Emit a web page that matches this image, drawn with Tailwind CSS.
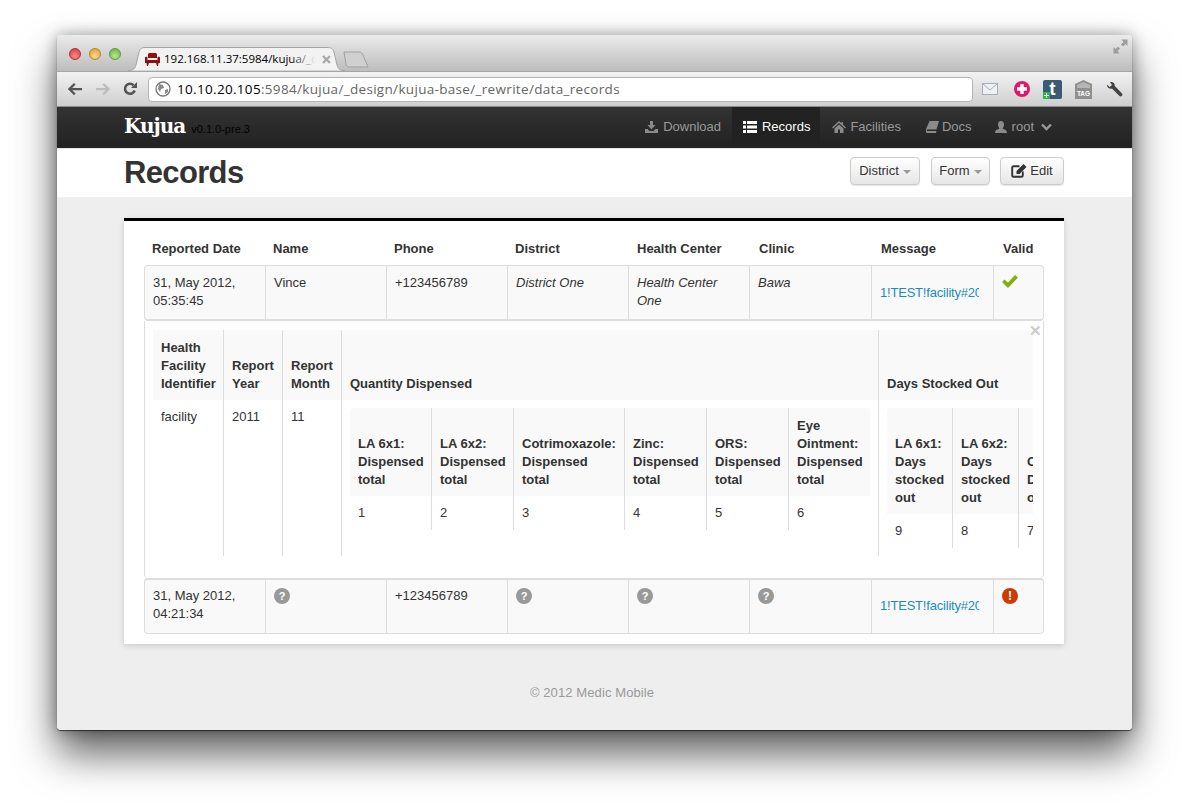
<!DOCTYPE html>
<html lang="en">
<head>
    <meta charset="UTF-8">
    <title>Records</title>
    <script src="https://cdn.jsdelivr.net/npm/@tailwindcss/browser@4"></script>
</head>
<body class="bg-white h-[809px] overflow-hidden font-['Liberation_Sans',sans-serif] text-[13px] leading-[18px] text-[#333]">
    <!-- Browser window -->
    <div class="ml-[57px] mt-[35px] w-[1075px] h-[695px] rounded-[4px] overflow-hidden flex flex-col bg-[#eeeeee] shadow-[0_1px_1px_rgba(0,0,0,0.6),0_24px_40px_rgba(0,0,0,0.62),0_0_16px_rgba(0,0,0,0.35)]">
        <!-- Tab strip -->
        <div class="h-[36px] shrink-0 relative bg-gradient-to-b from-[#ebebeb] to-[#bdbdbd] flex items-end pl-[12px]">
            <div class="flex gap-[8px] self-start mt-[13px]">
                <span class="w-[12px] h-[12px] rounded-full bg-[radial-gradient(circle_at_50%_70%,#ff8a8a,#d8323a)] border border-[#a33]"></span>
                <span class="w-[12px] h-[12px] rounded-full bg-[radial-gradient(circle_at_50%_70%,#ffd98a,#dd9a2a)] border border-[#b5842c]"></span>
                <span class="w-[12px] h-[12px] rounded-full bg-[radial-gradient(circle_at_50%_70%,#b6ea8e,#64ab3e)] border border-[#5c9a3c]"></span>
            </div>
            <!-- Active tab -->
            <div class="relative ml-[7px] w-[217px] h-[24px] flex items-center pl-[17px] text-[11.5px] text-black font-['Open_Sans',sans-serif] whitespace-nowrap">
                <svg width="217" height="24" viewBox="0 0 217 24" class="absolute left-0 top-0"><path d="M0 23.500C5 23.500 7 22 8 18L11 5C12 1.500 14 .5 17 .5H199C203 .5 205 1.500 206 5L209 18C210 22 212 23.500 217 23.500" fill="#f2f2f2" stroke="#a5a5a5"/></svg>
                <svg width="15" height="13" viewBox="0 0 15 13" class="relative shrink-0" fill="#8e1010"><path d="M3 1.500C3 .5 4 0 5 0h5c1 0 2 .5 2 1.500V5H3z M0 4.500C0 3.500 2.500 3.500 2.500 4.500V7h10V4.500C12.500 3.500 15 3.500 15 4.500V10H0z M1.500 10h2.500l-1 3H2z M11 10h2.500l-.5 3h-1z"/></svg>
                <span class="relative ml-[4px] w-[152px] overflow-hidden">192.168.11.37:5984/kujua/_design<span class="absolute right-0 top-0 h-full w-[26px] bg-gradient-to-r from-transparent to-[#f2f2f2]"></span></span>
                <svg width="9" height="9" viewBox="0 0 9 9" class="relative ml-[6px]" stroke="#a8a8a8" stroke-width="2.200"><path d="M1 1l7 7M8 1l-7 7"/></svg>
            </div>
            <!-- New tab -->
            <svg width="26" height="17" viewBox="0 0 26 17" class="-ml-[2px] mb-[3px]"><path d="M1 1H16C18 1 19 2 20 4L25 16H6C4 16 3.500 15 3 13z" fill="#d0d0d0" stroke="#a0a0a0"/></svg>
            <!-- Fullscreen arrows -->
            <svg width="15" height="15" viewBox="0 0 15 15" class="absolute right-[4px] top-[4px]" fill="#9d9d9d"><path d="M14.500 .5v6.500l-2-2-2.500 2.500-2-2L10.500 3l-2-2.500z M.5 14.500V8l2 2L5 7.500l2 2L4.500 12l2 2.500z"/></svg>
        </div>
        <!-- Toolbar -->
        <div class="h-[36px] shrink-0 bg-gradient-to-b from-[#f2f2f2] to-[#cfcfcf] border-y border-t-[#a5a5a5] border-b-[#8c8c8c] flex items-center pl-[10px]">
            <svg width="16" height="14" viewBox="0 0 16 14" fill="#555"><path d="M7 1l1.600 1.600L5.200 6H15v2.200H5.200l3.400 3.400L7 13.200.8 7.100z"/></svg>
            <svg width="16" height="14" viewBox="0 0 16 14" fill="#bdbdbd" class="ml-[12px]"><path d="M9 1L7.400 2.600 10.800 6H1v2.200h9.800l-3.400 3.400L9 13.200l6.200-6.100z"/></svg>
            <svg width="16" height="16" viewBox="0 0 16 16" class="ml-[11px]"><path d="M12.700 9.500A5 5 0 1 1 11.500 4.200" fill="none" stroke="#555" stroke-width="2.600"/><path d="M9 7h6V1z" fill="#555"/></svg>
            <div class="ml-[10px] w-[825px] h-[25px] bg-white border border-[#b5b5b5] rounded-[4px] flex items-center pl-[6px] text-[13.5px] tracking-[0.32px] font-['Open_Sans',sans-serif] text-[#666]">
                <svg width="16" height="16" viewBox="0 0 16 16"><circle cx="8" cy="8" r="7" fill="#fff" stroke="#777" stroke-width="1.300"/><path d="M4 3l4 1 1 3-3 1-1 3-2-3z M10 9l3-1 0 3-3 2z" fill="#888"/></svg>
                <span class="ml-[6px] whitespace-nowrap"><span class="text-black">10.10.20.105</span>:5984/kujua/_design/kujua-base/_rewrite/data_records</span>
            </div>
            <!-- Extension icons -->
            <svg width="16" height="12" viewBox="0 0 16 12" class="ml-[9px]"><rect x=".5" y=".5" width="15" height="11" fill="#eef0f4" stroke="#a8adb8"/><path d="M1 1l7 6 7-6" fill="none" stroke="#a8adb8"/></svg>
            <span class="ml-[16px] w-[16px] h-[16px] rounded-full bg-[#e0176f] flex items-center justify-center">
                <svg width="10" height="10" viewBox="0 0 10 10" fill="#fff"><path d="M3.300 0h3.400v3.300H10v3.400H6.700V10H3.300V6.700H0V3.300h3.300z"/></svg>
            </span>
            <span class="ml-[13px] w-[19px] h-[19px] rounded-[2px] bg-[#3c5a78] text-white font-bold text-[19px] leading-[18px] text-center relative">t<span class="absolute left-0 bottom-0 w-[7px] h-[7px] bg-[#29b34a] flex items-center justify-center"><svg width="5" height="5" viewBox="0 0 5 5" fill="#fff"><path d="M2 0h1v2h2v1H3v2H2V3H0V2h2z"/></svg></span></span>
            <svg width="17" height="19" viewBox="0 0 17 19" class="ml-[13px]"><path d="M8.500 0L17 4v15H0V4z" fill="#8f8f8f"/><path d="M8.500 2L15 5v3H2V5z" fill="#b5b5b5"/><text x="8.500" y="16" font-size="6.500" font-weight="bold" text-anchor="middle" fill="#fff" font-family="Liberation Sans">TAG</text></svg>
            <svg width="17" height="17" viewBox="0 0 17 17" class="ml-[14px]" fill="#444"><path d="M1 3.500L3.500 6 6 4 4 1.200C6.500.200 9 2 8.800 5l7 7.200a1.800 1.800 0 0 1-2.600 2.600L6.200 7.800C3 8.300.6 6 1 3.500z"/></svg>
        </div>
        <!-- Navbar -->
        <nav class="h-[41px] shrink-0 bg-gradient-to-b from-[#333] to-[#222] border-b border-[#252525] flex pl-[67px] pr-[78px] text-[13px] text-[#999]">
            <div class="flex items-baseline pt-[7px]">
                <span class="text-white font-bold text-[20px] leading-[24px] font-['DejaVu_Serif',serif] tracking-[-1px]">Kujua</span>
                <span class="ml-[6px] text-[11px] text-black">v0.1.0-pre.3</span>
            </div>
            <div class="ml-auto flex items-center">
                <a class="flex items-center pr-[11px] h-full"><svg width="13" height="12" viewBox="0 0 13 12" fill="#8a8a8a" class="mr-[5px]"><path d="M5 0h3v4h2.500L6.500 8.500 2.500 4H5z M0 8h2.500l2 2h4l2-2H13v4H0z"/></svg>Download</a>
                <a class="flex items-center pl-[11px] pr-[10px] h-full bg-[#222] text-white"><svg width="14" height="12" viewBox="0 0 14 12" fill="#fff" class="mr-[5px]"><path d="M0 0h3v3H0z M4 0h10v3H4z M0 4.500h3v3H0z M4 4.500h10v3H4z M0 9h3v3H0z M4 9h10v3H4z"/></svg>Records</a>
                <a class="flex items-center pl-[12px] pr-[11px] h-full"><svg width="14" height="12" viewBox="0 0 14 12" fill="#8a8a8a" class="mr-[4px]"><path d="M7 0l2.500 2.300V1H11v2.700L14 6.500l-1 1-6-5.500-6 5.500-1-1z M2.500 7.500L7 3.500l4.500 4V12H8V8.500H6V12H2.500z"/></svg>Facilities</a>
                <a class="flex items-center pl-[14px] pr-[13px] h-full"><svg width="13" height="12" viewBox="0 0 13 12" fill="#8a8a8a" class="mr-[3px]"><path d="M3.500 0H13l-2.500 8.500H1.500C.5 8.500.5 10 1.500 10h9l-.5 2H1C-.5 12-.3 9 .3 7.500z"/></svg>Docs</a>
                <a class="flex items-center pl-[10px] pr-[2px] h-full"><svg width="12" height="12" viewBox="0 0 12 12" fill="#8a8a8a" class="mr-[5px]"><path d="M6 0c2 0 3 1.500 3 3.500S8 7 7.500 7.500C9 8.500 12 8.500 12 12H0c0-3.500 3-3.500 4.500-4.500C4 7 3 5.500 3 3.500S4 0 6 0z"/></svg>root<svg width="11" height="8" viewBox="0 0 11 8" fill="none" stroke="#999" stroke-width="2.400" class="ml-[7px]"><path d="M1 1.500l4.500 4.500L10 1.500"/></svg></a>
            </div>
        </nav>
        <!-- Page header -->
        <header class="h-[49px] shrink-0 bg-white border-t border-[#e5e5e5] flex items-center pl-[67px] pr-[68px]">
            <h1 class="text-[31px] leading-[36px] font-bold text-[#333] tracking-[-0.65px] -mt-[1px]">Records</h1>
            <div class="ml-auto flex -mt-[4px] text-[#333]">
                <button class="w-[70px] h-[28px] flex items-center justify-center gap-[4px] rounded-[4px] border border-[#ccc] bg-gradient-to-b from-white to-[#e6e6e6] shadow-[0_1px_1px_rgba(0,0,0,0.1)]">District<span class="mt-[1px] border-x-[4px] border-x-transparent border-t-[4px] border-t-[#999]"></span></button>
                <button class="ml-[11px] w-[59px] h-[28px] flex items-center justify-center gap-[4px] rounded-[4px] border border-[#ccc] bg-gradient-to-b from-white to-[#e6e6e6] shadow-[0_1px_1px_rgba(0,0,0,0.1)]">Form<span class="mt-[1px] border-x-[4px] border-x-transparent border-t-[4px] border-t-[#999]"></span></button>
                <button class="ml-[10px] w-[64px] h-[28px] flex items-center justify-center gap-[3px] rounded-[4px] border border-[#ccc] bg-gradient-to-b from-white to-[#e6e6e6] shadow-[0_1px_1px_rgba(0,0,0,0.1)]"><svg width="16" height="14" viewBox="0 0 16 14"><path d="M8.500 2.200H2.500a1.300 1.300 0 0 0-1.300 1.300v8a1.300 1.300 0 0 0 1.300 1.300h8a1.300 1.300 0 0 0 1.300-1.300V7.500" fill="none" stroke="#333" stroke-width="1.900"/><path d="M5.500 7L12.500 0 15.500 3 8.500 10H5.500z" fill="#333"/></svg>Edit</button>
            </div>
        </header>
        <!-- Content -->
        <main class="flex-1 bg-[#eeeeee] pt-[21px] pl-[67px]">
            <div class="w-[940px] h-[426px] bg-white border-t-[3px] border-black shadow-[0_2px_6px_rgba(0,0,0,0.15)] px-[20px]">
                <!-- Column titles -->
                <div class="grid grid-cols-[121px_121px_121px_122px_122px_122px_122px_50px] h-[44px] items-end pb-[7px] font-bold text-[#333] pl-[8px]">
                    <span>Reported Date</span><span>Name</span><span>Phone</span><span>District</span><span>Health Center</span><span>Clinic</span><span>Message</span><span>Valid</span>
                </div>
                <!-- Record row -->
                <div class="grid grid-cols-[121px_121px_121px_121px_121px_122px_122px_1fr] h-[56px] bg-[#f9f9f9] border border-[#ddd] border-b-2 rounded-[4px] text-[#333]">
                    <div class="pl-[8px] pr-[8px] pt-[8px] border-r border-[#ddd]">31, May 2012,<br>05:35:45</div>
                    <div class="pl-[8px] pr-[8px] pt-[8px] border-r border-[#ddd]">Vince</div>
                    <div class="pl-[8px] pr-[8px] pt-[8px] border-r border-[#ddd]">+123456789</div>
                    <div class="pl-[8px] pr-[8px] pt-[8px] border-r border-[#ddd] italic">District One</div>
                    <div class="pl-[8px] pr-[8px] pt-[8px] border-r border-[#ddd] italic">Health Center One</div>
                    <div class="pl-[8px] pr-[8px] pt-[8px] border-r border-[#ddd] italic">Bawa</div>
                    <div class="pl-[8px] pt-[18px] border-r border-[#ddd] text-[#1a8dbb] tracking-[-0.2px]"><span class="block w-[99px] overflow-hidden whitespace-nowrap">1!TEST!facility#2011#11</span></div>
                    <div class="pl-[8px] pt-[9px]"><svg width="16" height="13" viewBox="0 0 16 13" fill="#86ad0e"><path d="M0 7l2.500-2.500L6 7.500 13 0l3 2.500L6 13z"/></svg></div>
                </div>
                <!-- Expanded detail -->
                <div class="relative h-[257px] border-x border-[#ddd] rounded-b-[4px] pl-[8px] pt-[9px] overflow-hidden">
                    <span class="absolute right-[1px] top-[1px] text-[#ccc] font-bold text-[15px]">✕</span>
                    <div class="w-[880px] overflow-hidden flex">
                        <div class="w-[71px] shrink-0 border-r border-[#ddd] h-[226px]">
                            <div class="h-[70px] bg-[#f9f9f9] flex items-end px-[8px] pb-[7px] font-bold">Health Facility Identifier</div>
                            <div class="px-[8px] pt-[8px]">facility</div>
                        </div>
                        <div class="w-[59px] shrink-0 border-r border-[#ddd] h-[226px]">
                            <div class="h-[70px] bg-[#f9f9f9] flex items-end px-[8px] pb-[7px] font-bold">Report Year</div>
                            <div class="px-[8px] pt-[8px]">2011</div>
                        </div>
                        <div class="w-[59px] shrink-0 border-r border-[#ddd] h-[226px]">
                            <div class="h-[70px] bg-[#f9f9f9] flex items-end px-[8px] pb-[7px] font-bold">Report Month</div>
                            <div class="px-[8px] pt-[8px]">11</div>
                        </div>
                        <!-- Quantity dispensed -->
                        <div class="w-[537px] shrink-0 border-r border-[#ddd] h-[226px]">
                            <div class="h-[70px] bg-[#f9f9f9] flex items-end px-[8px] pb-[7px] font-bold">Quantity Dispensed</div>
                            <div class="ml-[8px] mt-[8px] w-[520px] grid grid-cols-[82px_82px_111px_82px_82px_81px]">
                                <div class="h-[88px] bg-[#f9f9f9] border-r border-[#ddd] flex items-end px-[8px] pb-[7px] font-bold rounded-tl-[4px]">LA 6x1: Dispensed total</div>
                                <div class="h-[88px] bg-[#f9f9f9] border-r border-[#ddd] flex items-end px-[8px] pb-[7px] font-bold">LA 6x2: Dispensed total</div>
                                <div class="h-[88px] bg-[#f9f9f9] border-r border-[#ddd] flex items-end px-[8px] pb-[7px] font-bold">Cotrimoxazole: Dispensed total</div>
                                <div class="h-[88px] bg-[#f9f9f9] border-r border-[#ddd] flex items-end px-[8px] pb-[7px] font-bold">Zinc: Dispensed total</div>
                                <div class="h-[88px] bg-[#f9f9f9] border-r border-[#ddd] flex items-end px-[8px] pb-[7px] font-bold">ORS: Dispensed total</div>
                                <div class="h-[88px] bg-[#f9f9f9] flex items-end px-[8px] pb-[7px] font-bold rounded-tr-[4px]">Eye Ointment: Dispensed total</div>
                                <div class="h-[34px] border-r border-[#ddd] px-[8px] pt-[8px]">1</div>
                                <div class="h-[34px] border-r border-[#ddd] px-[8px] pt-[8px]">2</div>
                                <div class="h-[34px] border-r border-[#ddd] px-[8px] pt-[8px]">3</div>
                                <div class="h-[34px] border-r border-[#ddd] px-[8px] pt-[8px]">4</div>
                                <div class="h-[34px] border-r border-[#ddd] px-[8px] pt-[8px]">5</div>
                                <div class="h-[34px] px-[8px] pt-[8px]">6</div>
                            </div>
                        </div>
                        <!-- Days stocked out -->
                        <div class="flex-1 min-w-0 overflow-hidden">
                            <div class="h-[70px] bg-[#f9f9f9] flex items-end px-[8px] pb-[7px] font-bold whitespace-nowrap">Days Stocked Out</div>
                            <div class="ml-[8px] mt-[8px] w-[300px] grid grid-cols-[66px_66px_66px]">
                                <div class="h-[106px] bg-[#f9f9f9] border-r border-[#ddd] flex items-end px-[8px] pb-[7px] font-bold rounded-tl-[4px]">LA 6x1: Days stocked out</div>
                                <div class="h-[106px] bg-[#f9f9f9] border-r border-[#ddd] flex items-end px-[8px] pb-[7px] font-bold">LA 6x2: Days stocked out</div>
                                <div class="h-[106px] bg-[#f9f9f9] flex items-end px-[8px] pb-[7px] font-bold">Cotrimoxazole: Days stocked out</div>
                                <div class="h-[34px] border-r border-[#ddd] px-[8px] pt-[8px]">9</div>
                                <div class="h-[34px] border-r border-[#ddd] px-[8px] pt-[8px]">8</div>
                                <div class="h-[34px] px-[8px] pt-[8px]">7</div>
                            </div>
                        </div>
                    </div>
                </div>
                <!-- Second record -->
                <div class="grid grid-cols-[121px_121px_121px_121px_121px_122px_122px_1fr] h-[56px] bg-[#f9f9f9] border border-[#ddd] border-t-2 rounded-[4px] text-[#333]">
                    <div class="pl-[8px] pt-[7px] border-r border-[#ddd]">31, May 2012,<br>04:21:34</div>
                    <div class="pl-[8px] pt-[8px] border-r border-[#ddd]"><span class="flex w-[16px] h-[16px] rounded-full bg-[#999] text-white font-bold text-[11px] items-center justify-center">?</span></div>
                    <div class="pl-[8px] pt-[7px] border-r border-[#ddd]">+123456789</div>
                    <div class="pl-[8px] pt-[8px] border-r border-[#ddd]"><span class="flex w-[16px] h-[16px] rounded-full bg-[#999] text-white font-bold text-[11px] items-center justify-center">?</span></div>
                    <div class="pl-[8px] pt-[8px] border-r border-[#ddd]"><span class="flex w-[16px] h-[16px] rounded-full bg-[#999] text-white font-bold text-[11px] items-center justify-center">?</span></div>
                    <div class="pl-[8px] pt-[8px] border-r border-[#ddd]"><span class="flex w-[16px] h-[16px] rounded-full bg-[#999] text-white font-bold text-[11px] items-center justify-center">?</span></div>
                    <div class="pl-[8px] pt-[17px] border-r border-[#ddd] text-[#1a8dbb] tracking-[-0.2px]"><span class="block w-[99px] overflow-hidden whitespace-nowrap">1!TEST!facility#2011#11</span></div>
                    <div class="pl-[8px] pt-[8px]"><span class="flex w-[16px] h-[16px] rounded-full bg-[#cc3a05] text-white font-bold text-[12px] items-center justify-center">!</span></div>
                </div>
            </div>
            <footer class="mt-[40px] w-[936px] text-center text-[#999] tracking-[0.1px]">© 2012 Medic Mobile</footer>
        </main>
    </div>
</body>
</html>
